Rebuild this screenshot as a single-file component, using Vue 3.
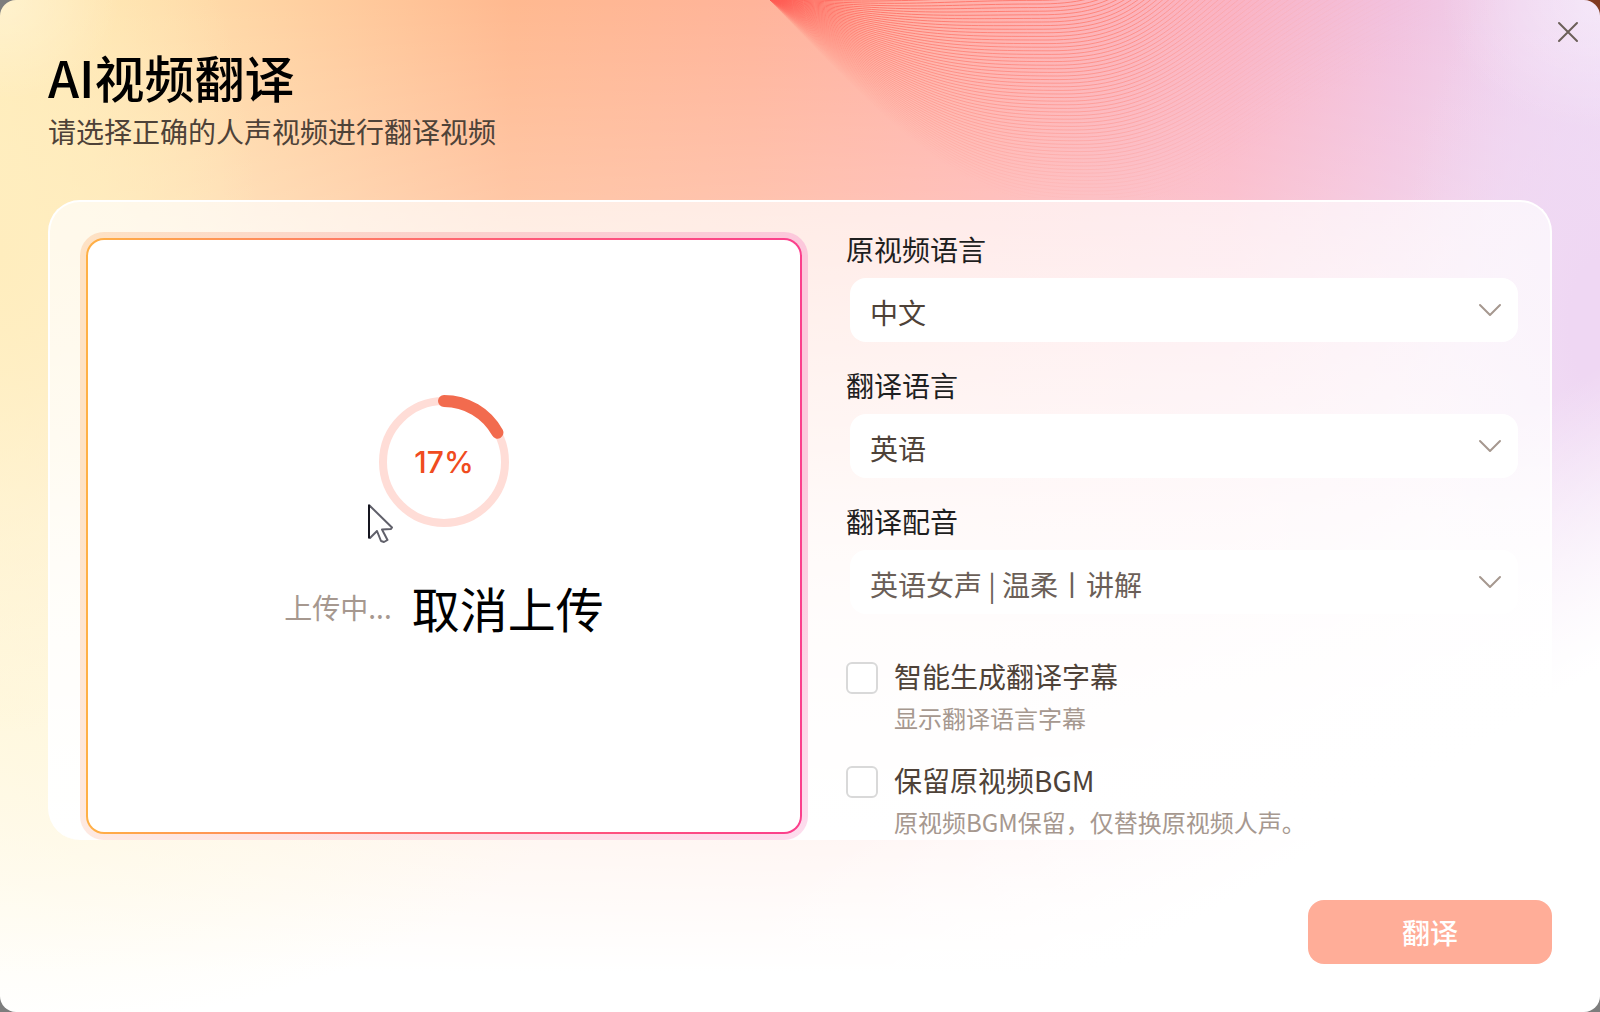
<template>
  <main class="dialog">
    <svg class="waves" viewBox="0 0 1600 198" fill="none" aria-hidden="true">
      <defs>
        <linearGradient id="wave-stroke" gradientUnits="userSpaceOnUse" x1="768" y1="0" x2="1500" y2="0">
          <stop offset="0" stop-color="#ff5a52" />
          <stop offset="0.5" stop-color="#ff7868" />
          <stop offset="0.66" stop-color="#ff9080" stop-opacity="0.5" />
          <stop offset="1" stop-color="#ffa898" stop-opacity="0" />
        </linearGradient>
      </defs>
      <path v-for="(wave, i) in waves" :key="i" :d="wave.d" :stroke-opacity="wave.opacity" stroke="url(#wave-stroke)" />
    </svg>

    <button class="close" type="button" aria-label="关闭">
      <svg width="32" height="32" viewBox="0 0 32 32" fill="none" stroke="currentColor" stroke-width="2" stroke-linecap="round">
        <path d="M7 7l18 18M25 7L7 25" />
      </svg>
    </button>

    <header class="header">
      <h1>AI视频翻译</h1>
      <p>请选择正确的人声视频进行翻译视频</p>
    </header>

    <section class="panel">
      <div class="upload-ring">
        <div class="upload-border">
          <div class="upload">
            <div class="progress">
              <svg width="136" height="136" viewBox="0 0 136 136" fill="none">
                <circle cx="68" cy="68" r="61" stroke="#ffddd7" stroke-width="8" />
                <circle
                  cx="68"
                  cy="68"
                  r="61"
                  stroke="#f26b4e"
                  stroke-width="12"
                  stroke-linecap="round"
                  pathLength="100"
                  :stroke-dasharray="`${percent} 100`"
                  transform="rotate(-90 68 68)"
                />
              </svg>
              <span class="percent">{{ percent }}%</span>
              <svg class="cursor" width="26" height="40" viewBox="0 0 26 40" fill="#fff" stroke="#60606a" stroke-width="2" stroke-linejoin="round">
                <path d="M1 1L24 23.500L23 25L14 25.500L19.500 36L16 38L13 37L9 27L2 34L1 34Z" />
                <path d="M1 1V34" stroke="#15151f" />
              </svg>
            </div>
            <div class="upload-status">
              <span>上传中...</span>
              <button type="button" class="cancel">取消上传</button>
            </div>
          </div>
        </div>
      </div>

      <form class="form" @submit.prevent>
        <div v-for="field in fields" :key="field.id" class="field">
          <label :for="field.id">{{ field.label }}</label>
          <div class="select-wrap">
            <select :id="field.id" v-model="field.value" :class="{ muted: field.muted }">
              <option>{{ field.value }}</option>
            </select>
            <svg class="chevron" width="24" height="14" viewBox="0 0 24 14" fill="none" stroke="currentColor" stroke-width="2" stroke-linecap="round" stroke-linejoin="round">
              <path d="M2 2l10 10L22 2" />
            </svg>
          </div>
        </div>

        <div class="options">
          <div v-for="option in options" :key="option.id" class="option">
            <input :id="option.id" v-model="option.checked" type="checkbox">
            <label :for="option.id">{{ option.label }}</label>
            <p>{{ option.desc }}</p>
          </div>
        </div>
      </form>
    </section>

    <footer class="footer">
      <button type="button" class="submit">翻译</button>
    </footer>
  </main>
</template>

<script setup>
import { ref } from 'vue'

const percent = ref(17)

const fields = ref([
  { id: 'source-lang', label: '原视频语言', value: '中文' },
  { id: 'target-lang', label: '翻译语言', value: '英语' },
  { id: 'voice', label: '翻译配音', value: '英语女声 | 温柔丨讲解', muted: true },
])

const options = ref([
  { id: 'subtitle', label: '智能生成翻译字幕', desc: '显示翻译语言字幕', checked: false },
  { id: 'bgm', label: '保留原视频BGM', desc: '原视频BGM保留，仅替换原视频人声。', checked: false },
])

// curves share one start point and fan out downwards
const waves = Array.from({ length: 62 }, (_, i) => {
  const y = i * 3.6 - 14
  const t = y / 200
  const x = 1035 + 60 * t
  const w = x - 768
  const c1 = `${768 + w * 0.5} ${y * 0.8 + 8}`
  const c2 = `${x - w * 0.35} ${y}`
  const c3 = `${x + 80 + 60 * t} ${y}`
  const c4 = `${1140 + 120 * t} ${y * 0.6 - 20}`
  const end = `${1190 + 350 * t} ${-130 + 130 * t}`
  return {
    d: `M768 -2C${c1} ${c2} ${x} ${y}C${c3} ${c4} ${end}`,
    opacity: 0.85 * (1 - i / 62),
  }
})
</script>

<style>
body {
  margin: 0;
  background: linear-gradient(90deg, #7d7d7d 0 50%, #803a20 50%) top / 100% 50% no-repeat, #7d7d7d;
}
</style>

<style scoped>
.dialog {
  position: relative;
  box-sizing: border-box;
  min-height: 100vh;
  padding: 42px 48px 48px;
  border-radius: 16px;
  overflow: hidden;
  font-family: "Noto Sans CJK SC", sans-serif;
  font-size: 28px;
  color: #4e4238;
  background:
    radial-gradient(160px 130px at 100% 0, rgba(255, 255, 255, 0.4), transparent),
    radial-gradient(120px 100px at 0 0, rgba(255, 255, 255, 0.3), transparent),
    linear-gradient(to top left, #fff 17%, rgba(255, 255, 255, 0) 32%),
    radial-gradient(260px 480px at 0 25%, #ffedbe, rgba(255, 237, 190, 0)),
    radial-gradient(600px 320px at 0 70%, rgba(255, 247, 218, 0.8), rgba(255, 247, 218, 0)),
    radial-gradient(200px 420px at 100% 32%, #efd7f3 15%, rgba(240, 216, 244, 0)),
    linear-gradient(180deg, rgba(255, 255, 255, 0), rgba(255, 255, 255, 0.2) 20%, rgba(255, 255, 255, 0.65) 50%, rgba(255, 255, 255, 0.88) 82%, #fff 96%),
    linear-gradient(90deg, #ffecb4, #ffdaa8 13%, #ffb990 32%, #ffb49a 47%, #ffb1ad 62%, #fab3c4 77%, #f2c1de 87%, #efd1ee 95%, #eed9f5);
}
button,
select {
  font-family: inherit;
}
button {
  padding: 0;
  border: 0;
  background: none;
  cursor: pointer;
}

.waves {
  position: absolute;
  top: 0;
  left: 0;
  width: 100%;
  pointer-events: none;
}
.close {
  position: absolute;
  top: 16px;
  right: 16px;
  width: 32px;
  height: 32px;
  color: #6b5f58;
}

.header {
  position: relative;
  margin-bottom: 48px;
}
.header h1 {
  margin: 0;
  font-size: 50px;
  line-height: 68px;
  font-weight: 500;
  color: #000;
}
.header p {
  margin: 0;
  line-height: 42px;
}

.panel {
  position: relative;
  display: grid;
  grid-template-columns: 13fr 12fr;
  gap: 38px;
  padding: 30px 32px 0 30px;
  border: 2px solid #fff;
  border-bottom: 0;
  border-radius: 32px;
  background: linear-gradient(180deg, rgba(255, 255, 255, 0.68), rgba(255, 255, 255, 0.74) 40%, rgba(255, 255, 255, 0.88) 65%, #fff);
}

/* soft halo, gradient line and white body are three nested boxes */
.upload-ring {
  display: flex;
  padding: 6px;
  border-radius: 24px;
  background:
    linear-gradient(180deg, rgba(255, 240, 255, 0) 40%, rgba(255, 240, 255, 0.5)),
    linear-gradient(90deg, #fee2c4, #fccfcb 50%, #fcc8dc);
}
.upload-border {
  display: flex;
  flex: 1;
  padding: 2px;
  border-radius: 18px;
  background: linear-gradient(90deg, #ffb045, #ff5a78 60%, #fb3f8c);
}
.upload {
  display: flex;
  flex: 1;
  flex-direction: column;
  align-items: center;
  justify-content: center;
  gap: 44px;
  padding-bottom: 38px;
  border-radius: 16px;
  background: #fff;
}
.progress {
  position: relative;
  display: grid;
  place-items: center;
  width: 136px;
  height: 136px;
}
.percent {
  position: absolute;
  font-family: Inter, sans-serif;
  font-size: 30px;
  font-weight: 500;
  color: #f04b20;
}
.cursor {
  position: absolute;
  top: 110px;
  left: -8px;
}
.upload-status {
  display: flex;
  align-items: center;
  gap: 20px;
  line-height: 66px;
  color: #a6988f;
}
.cancel {
  font-size: 48px;
  line-height: 66px;
  color: #000;
}

.field {
  display: flex;
  flex-direction: column;
  gap: 12px;
  margin-bottom: 26px;
}
.field label {
  line-height: 34px;
  color: #1f1f1f;
}
.select-wrap {
  position: relative;
  margin-left: 4px;
}
.select-wrap select {
  display: block;
  width: 100%;
  height: 64px;
  padding: 4px 64px 0 20px;
  border: 0;
  border-radius: 16px;
  font-size: 28px;
  color: #4e4238;
  background: #fff;
  appearance: none;
}
.select-wrap select.muted {
  color: #6b5f58;
}
.chevron {
  position: absolute;
  top: 25px;
  right: 16px;
  color: #a6988f;
  pointer-events: none;
}

.options {
  display: flex;
  flex-direction: column;
  gap: 28px;
  margin-top: 46px;
}
.option {
  display: grid;
  grid-template-columns: 32px 1fr;
  gap: 4px 16px;
  align-items: center;
  line-height: 36px;
}
.option input {
  width: 32px;
  height: 32px;
  margin: 0;
  border: 2px solid #d9d9d9;
  border-radius: 6px;
  background: #fff;
  appearance: none;
}
.option input:checked {
  border-color: #f26b4e;
  background: #f26b4e;
}
.option label {
  padding-bottom: 4px;
  line-height: 32px;
}
.option p {
  grid-column: 2;
  margin: 0;
  font-size: 24px;
  color: #a6988f;
}

.footer {
  display: flex;
  justify-content: flex-end;
  margin-top: 60px;
}
.submit {
  width: 244px;
  height: 64px;
  border-radius: 16px;
  font-size: 28px;
  font-weight: 500;
  color: #fff;
  background: #ffad98;
}
</style>
